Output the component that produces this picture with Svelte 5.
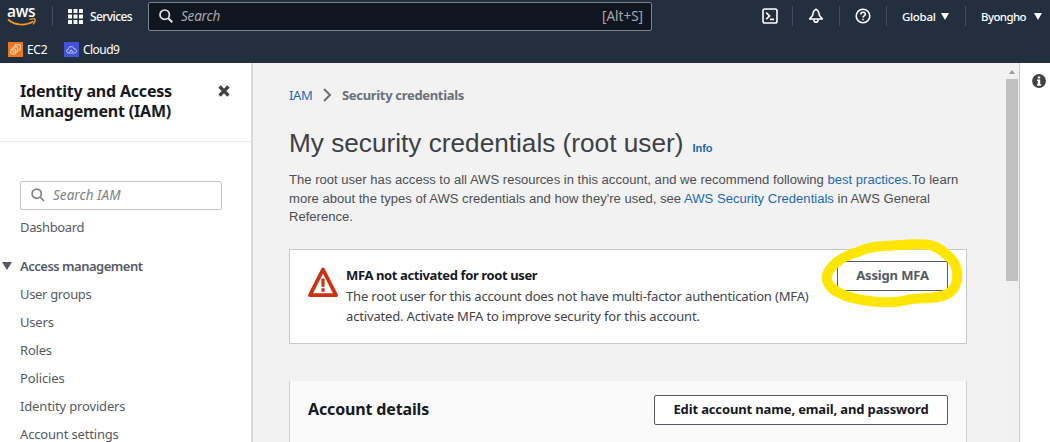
<script>
  const links = ['User groups', 'Users', 'Roles', 'Policies', 'Identity providers', 'Account settings'];
  const spacing = [-0.33, -0.2, -0.2, -0.12, -0.15, -0.17];
</script>

<div class="app">
  <header>
    <div class="top">
      <div class="logo">
        <span>aws</span>
        <svg width="30" height="10" viewBox="0 0 30 10"><path d="M1 1.5C8 7.8 19 8 26.5 3.2" fill="none" stroke="#f29a22" stroke-width="1.7"/><path d="M22.5 1.5C25 .7 27.6.6 28 1.2c.4.8-.4 3.4-1.8 5.2" fill="none" stroke="#f29a22" stroke-width="1.4"/></svg>
      </div>
      <i class="sep s1"></i>
      <svg class="grid" width="15" height="15" viewBox="0 0 15 15" fill="#fff">
        {#each [0, 5.5, 11] as y}{#each [0, 5.5, 11] as x}<rect {x} {y} width="4" height="4" rx=".5"/>{/each}{/each}
      </svg>
      <span class="services">Services</span>
      <div class="search">
        <svg width="14" height="14" viewBox="0 0 14 14" fill="none" stroke="#e4e6e8" stroke-width="1.7"><circle cx="5.7" cy="5.7" r="4.7"/><path d="m9 9 4.3 4.2" stroke-width="2"/></svg>
        <em>Search</em><kbd>[Alt+S]</kbd>
      </div>
      <svg class="shell" width="16" height="16" viewBox="0 0 16 16" fill="none" stroke="#fff" stroke-width="1.6"><rect x="1" y="1" width="14" height="14" rx="1.8"/><path d="m4.2 4.6 3.4 3.3-3.4 3.3M8 11.4h4"/></svg>
      <i class="sep s2"></i>
      <svg class="bell" width="16" height="16" viewBox="0 0 16 16" fill="none" stroke="#fff" stroke-width="1.6" stroke-linejoin="round"><path d="M8 1.2C5.4 2.2 5 4.2 4.7 7.2L1.6 11h12.8l-3.1-3.8C11 4.2 10.6 2.2 8 1.2z"/><path d="M5.8 11.3c.2 2.1 1 3 2.2 3s2-.9 2.2-3"/></svg>
      <i class="sep s3"></i>
      <svg class="help" width="16" height="16" viewBox="0 0 16 16" fill="none" stroke="#fff" stroke-width="1.6"><circle cx="8" cy="8" r="6.8"/><path d="M5.8 6.4c0-1.4.9-2.2 2.2-2.2s2.3.8 2.3 2c0 1.700-2.300 1.500-2.300 3.300M8 10.700v1.600"/></svg>
      <i class="sep s4"></i>
      <span class="menu global">Global</span><b class="caret"></b>
      <i class="sep s5"></i>
      <span class="menu user">Byongho</span><b class="caret"></b>
    </div>
    <div class="favs">
      <svg width="15" height="15" viewBox="0 0 15 15"><rect width="15" height="15" fill="#e8771f"/><g fill="none" stroke="#ffe2c0" stroke-width="1"><rect x="2.800" y="7" width="5" height="5" rx="1"/><rect x="4.800" y="5" width="5" height="5" rx="1"/><path d="M7 4V2.800h5.200V8H11"/></g></svg>
      <span class="ec2">EC2</span>
      <svg width="15" height="15" viewBox="0 0 15 15"><rect width="15" height="15" fill="#4453d6"/><path d="M4.700 11C2 11 1.900 7.700 4.200 7.400 4.500 3.900 9.300 3.700 10 6.800c3.300.1 3.300 4.200.4 4.200zM5 10.800l2-3 1.500 2 1-.8" fill="none" stroke="#c9d2ff" stroke-width=".9"/></svg>
      <span class="c9">Cloud9</span>
    </div>
  </header>

  <div class="body">
    <aside>
      <div class="title">
        <h2><span>Identity and Access</span><br><span>Management (IAM)</span></h2>
        <svg width="12" height="12" viewBox="0 0 12 12"><path d="m1.500 1.500 9 9m0-9-9 9" stroke="#444" stroke-width="3.200"/></svg>
      </div>
      <div class="find">
        <svg width="14" height="14" viewBox="0 0 14 14" fill="none" stroke="#7d8185" stroke-width="1.700"><circle cx="5.700" cy="5.700" r="4.600"/><path d="m9 9 4 4"/></svg>
        <em>Search IAM</em>
      </div>
      <nav>
        <div class="dash">Dashboard</div>
        <div class="section"><b class="caret dark"></b><span>Access management</span></div>
        {#each links as link, i}<div class="link" style="letter-spacing: {spacing[i]}px">{link}</div>{/each}
      </nav>
    </aside>

    <main>
      <div class="crumbs">
        <a>IAM</a>
        <svg width="9" height="14" viewBox="0 0 9 14"><path d="m1 1 6 6-6 6" fill="none" stroke="#6b7075" stroke-width="2"/></svg>
        <strong>Security credentials</strong>
      </div>
      <h1><span>My security credentials (root user)</span><a>Info</a></h1>
      <p class="intro">
        <span>The root user has access to all AWS resources in this account, and we recommend following <a>best practices</a>.To learn</span><br>
        <span>more about the types of AWS credentials and how they're used, see <a>AWS Security Credentials</a> in AWS General</span><br>
        <span>Reference.</span>
      </p>
      <section class="alert">
        <svg class="warn" width="30" height="31" viewBox="0 0 30 31"><path d="M15 2.500 28 28.200H2z" fill="none" stroke="#cb3214" stroke-width="3.800" stroke-linejoin="round"/><path d="M15 11.500v8.200M15 21.200v3.500" stroke="#cb3214" stroke-width="3.200"/></svg>
        <div class="msg">
          <strong>MFA not activated for root user</strong>
          <span>The root user for this account does not have multi-factor authentication (MFA)</span>
          <span>activated. Activate MFA to improve security for this account.</span>
        </div>
        <div class="assign">
          <button>Assign MFA</button>
          <svg class="ring" width="144" height="72" viewBox="0 0 144 72"><path d="M126 17.500C118 9 109 7.500 90 8.500 68 9.500 50 10 39 16 21 20.500 9 32 7.500 41 8 55 28 62.500 50 65c12 1.800 29 2 40-1.500 11-2.200 29 .5 40-6.500 7-5 9-14 8-22-1.500-8-5-13-12-17.500z" fill="none" stroke="#ffe600" stroke-width="10" stroke-linejoin="round"/></svg>
        </div>
      </section>
      <section class="details">
        <h3>Account details</h3>
        <button>Edit account name, email, and password</button>
      </section>
    </main>
    <div class="scroll"><b></b><i></i></div>
    <div class="panel"><svg width="14" height="14" viewBox="0 0 14 14"><circle cx="7" cy="7" r="6.900" fill="#414141"/><path d="M5.800 2.500h2.400v2H5.800zM5 5.600h3.200v4.600H9.200v1.500H4.900v-1.500H5.800V7H5z" fill="#fff"/></svg></div>
  </div>
</div>

<style>
  .app { width: 1050px; height: 442px; overflow: hidden; background: #fff; font-family: "Noto Sans", sans-serif; font-size: 13px; color: #16191f; }
  .app * { box-sizing: border-box; }
  svg, .sep, .caret { flex: none; display: block; }
  span, em, kbd, strong, button { white-space: nowrap; }
  header { height: 63px; background: #232f3e; color: #fff; }
  .top { height: 32px; display: flex; align-items: center; }
  .logo { width: 30px; height: 32px; margin-left: 7px; padding-top: 2px; }
  .logo span { display: block; font: 600 15.500px/18px "Open Sans", sans-serif; letter-spacing: -.3px; }
  .logo svg { margin-top: -2px; }
  .sep { width: 1px; height: 20px; background: #414d5c; }
  .s1 { margin-left: 15px; }
  .grid { margin-left: 15px; }
  .services { margin-left: 7px; width: 58px; flex: none; font-weight: 500; font-size: 12px; letter-spacing: -.6px; }
  .search { width: 504px; flex: none; height: 29px; border: 1px solid #7b838c; border-radius: 2px; background: #0f1620; display: flex; align-items: center; padding: 0 8px 0 10px; }
  .search em { margin-left: 8px; color: #a5a9ae; font-size: 13.500px; letter-spacing: -.2px; }
  .search kbd { margin-left: auto; font: 13.500px "Noto Sans", sans-serif; color: #a5a9ae; }
  .shell { margin-left: 110px; }
  .s2 { margin-left: 14px; } .bell { margin-left: 15px; } .s3 { margin-left: 15px; } .help { margin-left: 15px; } .s4 { margin-left: 15px; }
  .menu { font-size: 11.500px; font-weight: 500; flex: none; letter-spacing: -.3px; }
  .global { margin-left: 15px; width: 39px; }
  .user { margin-left: 15px; width: 53px; letter-spacing: -.6px; }
  .caret { width: 0; height: 0; border: 4px solid transparent; border-top: 7px solid #fff; border-bottom: 0; }
  .s5 { margin-left: 16px; }
  .favs { display: flex; align-items: center; height: 31px; padding: 3px 0 0 8px; font-size: 12px; }
  .ec2 { width: 37px; margin-left: 4px; letter-spacing: -.3px; }
  .c9 { margin-left: 4px; letter-spacing: -.55px; }
  .body { height: 379px; display: flex; }
  aside { width: 253px; flex: none; border-right: 2px solid #d8dada; }
  .title { height: 79px; border-bottom: 1px solid #e9eaea; padding: 18px 21px 0 20px; display: flex; justify-content: space-between; }
  h2 { margin: 0; font: 700 16px/20px "Noto Sans", sans-serif; letter-spacing: -.2px; }
  .title svg { margin-top: 4px; }
  .find { width: 202px; height: 29px; margin: 39px 0 0 20px; border: 1px solid #c2c5c7; border-radius: 2px; display: flex; align-items: center; padding: 0 0 1px 10px; }
  .find em { margin-left: 8px; color: #7d8185; font-size: 13.500px; letter-spacing: .05px; }
  nav { color: #545b64; }
  .dash { padding-left: 20px; line-height: 28px; margin-top: 3px; letter-spacing: -.35px; }
  .section { display: flex; align-items: center; padding-left: 2px; height: 28px; margin-top: 11px; font-weight: 600; letter-spacing: -.5px; }
  .dark { border: 5px solid transparent; border-top: 8px solid #545b64; border-bottom: 0; margin-right: 8px; }
  .link { padding-left: 20px; line-height: 28px; height: 28px; }
  main { width: 753px; flex: none; background: #f2f2f2; padding-left: 36px; }
  .crumbs { display: flex; align-items: center; height: 20px; margin-top: 22px; }
  a { color: #1b6bb3; }
  .crumbs a { width: 34px; letter-spacing: -.3px; }
  .crumbs strong { margin-left: 10px; color: #687078; font-size: 13px; letter-spacing: -.32px; }
  h1 { margin: 19px 0 0; height: 38px; font: 26.200px/38px "Liberation Sans", sans-serif; color: #3d4045; display: flex; }
  h1 a { font-size: 11px; font-weight: 700; line-height: 48px; margin-left: 9px; }
  .intro { margin: 9px 0 0; font: 13.050px/18.700px "Liberation Sans", sans-serif; color: #4c4f54; height: 57px; letter-spacing: .01px; }
  section { width: 678px; }
  .alert { height: 95px; margin-top: 21px; background: #fff; border: 1px solid #c6c8ca; display: flex; }
  .warn { margin: 17px 0 0 18px; }
  .msg { margin: 15px 0 0 8px; display: flex; flex-direction: column; width: 491px; line-height: 20.700px; color: #3f444b; letter-spacing: -.16px; }
  .msg strong { color: #16191f; letter-spacing: -.38px; }
  button { font: 700 13px "Noto Sans", sans-serif; background: #fff; border: 1px solid #545b64; border-radius: 2px; padding: 0 0 2px; color: #545b64; height: 30px; letter-spacing: -.14px; }
  .assign { position: relative; margin-top: 11px; }
  .assign button { width: 111px; display: block; padding-bottom: 3px; }
  .ring { position: absolute; left: -18px; top: -25px; }
  .details { height: 62px; margin-top: 37px; background: #fafafa; border: solid #d0d2d3; border-width: 0 1px; padding: 0 18px; display: flex; justify-content: space-between; }
  h3 { margin: 16px 0 0; font: 700 16px/24px "Noto Sans", sans-serif; letter-spacing: -.15px; }
  .details button { width: 294px; margin-top: 14px; color: #16191f; }
  .scroll { width: 14px; flex: none; background: #f1f1f1; border-right: 1px solid #c8c8c8; }
  .scroll b { display: block; width: 0; margin: 7px 0 0 3px; border: 3px solid transparent; border-top: 0; border-bottom: 4px solid #999; }
  .scroll i { display: block; width: 12px; height: 202px; margin-top: 5px; background: #c0c0c0; }
  .panel { padding: 11px 0 0 12px; }
</style>
